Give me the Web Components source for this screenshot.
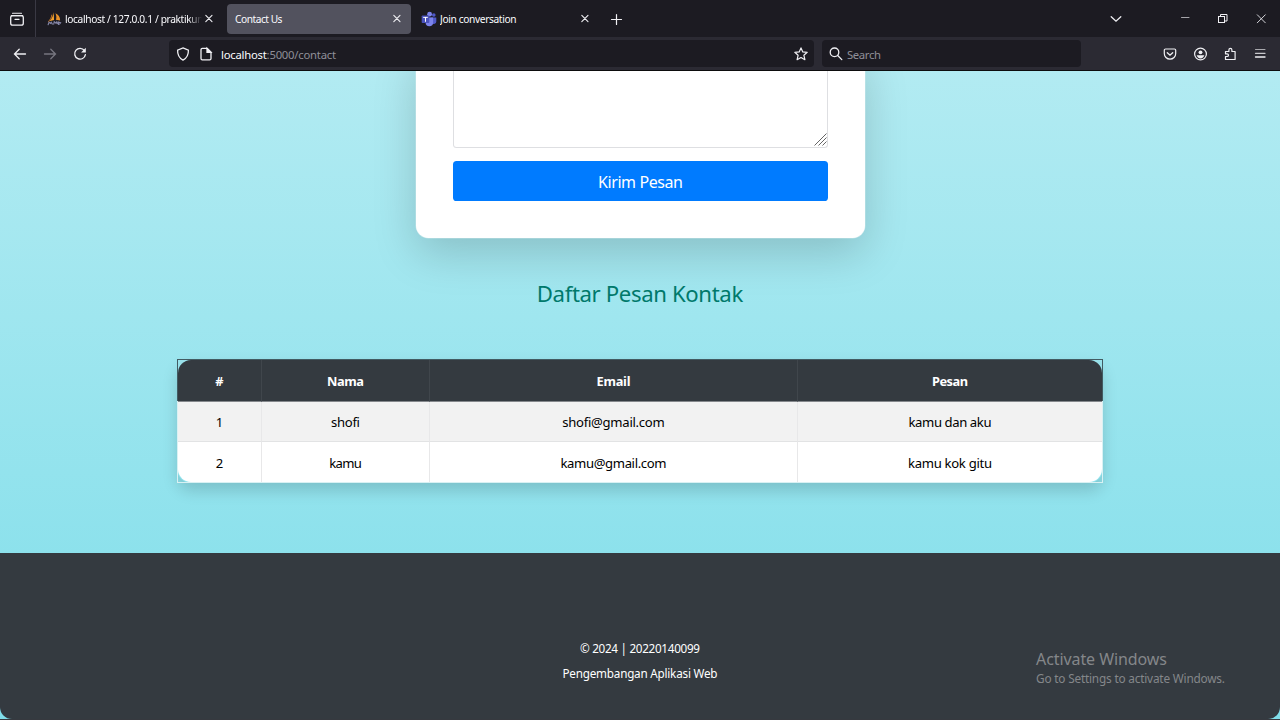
<!DOCTYPE html>
<html lang="id">
<head>
<meta charset="utf-8">
<title>Contact Us</title>
<style>
html,body{margin:0;height:720px;overflow:hidden;background:#36393f}
body{font-family:"Noto Sans","Open Sans",sans-serif}
</style>
</head>
<body>
<desktop-screen></desktop-screen>
<script>
const define = (name, html, setup) => customElements.define(name, class extends HTMLElement {
  connectedCallback() {
    if (this.shadowRoot) return;
    const t = document.createElement('template');
    t.innerHTML = html;
    this.attachShadow({mode: 'open'}).append(t.content.cloneNode(true));
    if (setup) setup(this);
  }
});

/* A single line of text tracked so that it fills the width given in "w". */
define('fit-text', `<style>
:host{display:inline-block;white-space:nowrap;flex:none}
</style><slot></slot>`, el => {
  const w = parseFloat(el.getAttribute('w'));
  const n = el.textContent.length;
  const natural = el.getBoundingClientRect().width;
  el.style.letterSpacing = ((w - natural) / (n - 1)) + 'px';
  el.style.marginRight = (-(w - natural) / (n - 1)) + 'px';
});

const icons = {
  view: '<path d="M3.5 2.2h9M2.3 4.6h11.4" stroke-width="1.1"/><rect x="1.7" y="4.6" width="12.6" height="9.6" rx="2"/><path d="M6 8.3h4"/>',
  close: '<path d="M4.8 4.4l6.2 6.2M11 4.4l-6.2 6.2" stroke-width="1.1"/>',
  plus: '<path d="M7.5 2.5v10M2.500 7.5h10" stroke-width="1.2"/>',
  chevron: '<path d="M3.2 5.7L8 10.2l4.8-4.5" stroke-width="1.3"/>',
  min: '<path d="M4.5 6.5h7.5" stroke="#a5a5aa" stroke-width="1"/>',
  restore: '<rect x="3.5" y="5.5" width="6" height="6" stroke-width="1"/><path d="M5.500 5.500v-2h6.500v6.500h-2.500" stroke-width="1"/>',
  wclose: '<path d="M4.3 3.800l8 8M12.3 3.800l-8 8" stroke-width="1" stroke="#d5d5da"/>',
  back: '<path d="M13.5 8H2.8M7.2 3.3L2.5 8l4.7 4.7"/>',
  fwd: '<path d="M2.5 8h10.7M8.8 3.3L13.5 8l-4.7 4.7"/>',
  reload: '<path d="M12.4 4.5A5.4 5.4 0 1 0 13.4 8.6"/><path d="M13.8 1.8v4.7H9.1z" fill="currentColor" stroke="none"/>',
  shield: '<path d="M8 1.9l5.4 2.2c.2 4.6-1.6 8-5.4 10-3.800-2-5.600-5.400-5.400-10z"/>',
  page: '<path d="M4.300 2.400h4.800l3.900 3.900v6.300a1.300 1.300 0 0 1-1.300 1.300H4.300A1.300 1.300 0 0 1 3 12.600V3.700a1.300 1.300 0 0 1 1.300-1.300z"/><path d="M9 2.400v4h4z" fill="currentColor"/>',
  star: '<path d="M8 1.900l1.800 4 4.400.4-3.300 3 1 4.400L8 11.500l-3.900 2.200 1-4.400-3.300-3 4.400-.4z" stroke-width="1.200" stroke-linejoin="round"/>',
  search: '<circle cx="6.500" cy="6.300" r="4.300"/><path d="M9.700 9.500l4.100 4.100"/>',
  pocket: '<path d="M3.500 3h9A1.200 1.200 0 0 1 13.700 4.200V7.500a5.700 5.700 0 0 1-11.400 0V4.200A1.200 1.200 0 0 1 3.500 3z" stroke-width="1.200"/><path d="M5.300 6.700L8 9.200l2.700-2.500"/>',
  account: '<circle cx="8.500" cy="8" r="5.900" stroke-width="1.200"/><circle cx="8.500" cy="6.300" r="1.900" fill="currentColor" stroke="none"/><path d="M4.700 9.300h7.600c-.5 2-1.900 3.100-3.800 3.100S5.200 11.300 4.700 9.300z" fill="currentColor" stroke="none"/>',
  puzzle: '<path d="M3.500 13.500V10.500h1.600a1.300 1.300 0 0 0 0-2.700H3.500V5.500h3.400V3.900a1.500 1.500 0 0 1 3 0v1.600h3.200v8z" stroke-width="1.200" stroke-linejoin="round"/>',
  menu: '<path d="M3.500 3.500h9.500" stroke="#a9a9ae" stroke-width="1"/><path d="M3.500 7.300h9.500" stroke="#c8c8cc"/><path d="M3.500 11h9.500"/>',
  sails: '<path d="M7.200 1.200L7.500 9.700 2.600 11C4.800 8.300 6.800 5 7.200 1.200z" fill="#f5a12a" stroke="none"/><path d="M9 2.400c3.200 1.300 5 4 5 7.600L9.500 9.400C10.300 7 10.100 4.800 9 2.400z" fill="#e89129" stroke="none"/><path d="M5.200 4.300c-.4 3-1.800 5-3.600 6.900" stroke="#df8529" stroke-width=".9"/><path d="M1.200 14.600l1-2.700 1.500 1.300.8-1.200 1.200 2M7.200 14l.5-2.600 2 1.700.8-1.600 1 2M12.300 14.300v-2.600l2.200.9-1 1.300" stroke="#8687a8" stroke-width="1.200"/>',
  teams: '<circle cx="12.800" cy="4" r="1.800" fill="#5059c9" stroke="none"/><path d="M9.500 6.400h5.800v4a2.700 2.700 0 0 1-4.500 2z" fill="#5059c9" stroke="none"/><circle cx="8.600" cy="3.200" r="2.400" fill="#7b83eb" stroke="none"/><path d="M4.600 6.400h7.500v5a3.750 3.750 0 0 1-7.500 0z" fill="#7b83eb" stroke="none"/><rect x=".7" y="4.400" width="7.600" height="7.600" rx=".8" fill="#4b53bc" stroke="none"/><path d="M2.600 6.400h3.800M4.500 6.400v4" stroke="#fff" stroke-width="1"/>'
};
define('ui-icon', `<style>
:host{display:block;flex:none;width:16px;height:16px;color:#f0f0f4}
svg{display:block;width:100%;height:100%;fill:none;stroke:currentColor;stroke-width:1.300;stroke-linecap:round}
</style><svg viewBox="0 0 16 16"></svg>`, el => {
  el.shadowRoot.querySelector('svg').innerHTML = icons[el.getAttribute('name')];
});

define('browser-tab', `<style>
:host{display:flex;box-sizing:border-box;align-items:center;flex:none;width:184px;height:30px;border-radius:4px;padding:0 6px 0 8px;color:#fbfbfe;font-size:10.200px}
:host([active]){background:#52525e}
.label{flex:1;min-width:0;overflow:hidden;line-height:18px}
:host([long]) .label{-webkit-mask-image:linear-gradient(to left,transparent,#000 14px);mask-image:linear-gradient(to left,transparent,#000 14px);margin-right:-1px}
</style><slot name="icon"></slot><div class="label"><slot></slot></div><ui-icon name="close"></ui-icon>`);

define('tab-strip', `<style>
:host{display:flex;align-items:center;height:37px;background:#1c1b22}
.view{box-sizing:border-box;width:36px;height:37px;border-right:1px solid #3a3944;display:flex;align-items:center;padding:1px 0 0 9px;margin-right:3px}
.tabs{display:flex;gap:4px}
.i{width:15px;height:15px;margin-right:3px}
.plus{margin:2px 0 0 10px}
.space{flex:1}
.win{display:flex;padding-right:11px}
</style>
<div class="view"><ui-icon name="view"></ui-icon></div>
<div class="tabs">
<browser-tab long><ui-icon class="i" slot="icon" name="sails"></ui-icon><fit-text w="138.500">localhost / 127.0.0.1 / praktikun</fit-text></browser-tab>
<browser-tab active><fit-text w="47.500">Contact Us</fit-text></browser-tab>
<browser-tab><ui-icon class="i" style="margin-left:-2px;width:16px;height:16px" slot="icon" name="teams"></ui-icon><fit-text w="76.500">Join conversation</fit-text></browser-tab>
</div>
<ui-icon class="plus" name="plus"></ui-icon>
<div class="space"></div>
<div class="win"><ui-icon name="chevron" style="margin-right:53px"></ui-icon><ui-icon name="min" style="margin-right:22px"></ui-icon><ui-icon name="restore" style="margin-right:22px"></ui-icon><ui-icon name="wclose"></ui-icon></div>`);

define('nav-bar', `<style>
:host{display:flex;box-sizing:border-box;align-items:center;height:34px;background:#2b2a33;border-bottom:1px solid #0c0c0d;padding:0 12px;font-size:11.300px;color:#8f8f98}
.g{display:flex;gap:14px}
.field{box-sizing:border-box;display:flex;align-items:center;height:27px;border-radius:4px;background:#1c1b22}
.url{width:645px;margin-left:81px;padding:0 5px 0 6px;gap:7px}
.url fit-text{margin-top:2px}
b{font-weight:400;color:#fbfbfe}
.search{width:259px;margin-left:8px;padding:0 6px;gap:3px}
.search fit-text{margin-top:2px}
.space{flex:1}
</style>
<div class="g"><ui-icon name="back"></ui-icon><ui-icon name="fwd" style="color:#777680"></ui-icon><ui-icon name="reload"></ui-icon></div>
<div class="field url"><ui-icon name="shield"></ui-icon><ui-icon name="page"></ui-icon><fit-text w="115"><b>localhost</b>:5000/contact</fit-text><div class="space"></div><ui-icon name="star"></ui-icon></div>
<div class="field search"><ui-icon name="search"></ui-icon><fit-text w="34">Search</fit-text></div>
<div class="space"></div>
<div class="g"><ui-icon name="pocket"></ui-icon><ui-icon name="account"></ui-icon><ui-icon name="puzzle"></ui-icon><ui-icon name="menu"></ui-icon></div>`);

define('contact-card', `<style>
:host{display:block;box-sizing:border-box;width:449px;height:187px;margin:-20px 0 0 416px;padding:0 37px;background:#fff;border-radius:12.500px;box-shadow:0 0 0 .500px rgba(235,245,246,.5),0 14.400px 43.200px rgba(0,0,0,.175)}
.area{box-sizing:border-box;height:97px;border:1px solid #dedfe2;border-top:0;border-radius:0 0 3.500px 3.500px;display:flex;align-items:flex-end;justify-content:flex-end}
svg{display:block;width:13px;height:13px;margin:0 0 1px}
.button{display:flex;align-items:center;justify-content:center;height:40px;margin-top:13px;border-radius:3.600px;background:#007bff;color:#fff;font-size:16px}
.button fit-text{margin-top:1px}
</style><div class="area"><svg viewBox="0 0 13 13" fill="none" stroke="#666" stroke-width="1"><path d="M.5 12.500L12.500.5M4.500 12.500l8-8M8.500 12.500l4-4"/></svg></div><div class="button"><fit-text w="85">Kirim Pesan</fit-text></div>`);

define('message-table', `<style>
:host{display:block;position:relative;box-sizing:border-box;width:926px;height:124px;padding:1px;margin:0 auto;border-radius:14px;box-shadow:0 7.200px 14.400px rgba(0,0,0,.15);font-size:13.100px;color:#000}
.body{border-radius:13px;overflow:hidden}
.row{display:grid;grid-template-columns:84px 168px 368px 304px}
.row>div{box-sizing:border-box;display:flex;align-items:center;justify-content:center;height:41px;background:#fff;border-right:1px solid #e8e8e9;padding-top:1px}
.row>div:last-child{border-right:0}
.head>div{height:42px;background:#343a40;border-right-color:#40464c;border-bottom:1px solid #85888c;color:#fff;font-weight:700;font-size:12.800px}
.odd>div{height:40px;background:#f2f2f2;border-bottom:1px solid #e2e3e4;padding-top:0}
.even>div{height:40px;padding-top:2px}
.frame{position:absolute;left:0;right:0;box-sizing:border-box;pointer-events:none}
.top{top:0;height:42px;border:1px solid #425b62;border-bottom:0}
.bottom{top:42px;bottom:0;border:1px solid #d9f1f3;border-top:0}
</style>
<div class="body">
<div class="row head"><div>#</div><div><fit-text w="37">Nama</fit-text></div><div><fit-text w="34">Email</fit-text></div><div><fit-text w="36">Pesan</fit-text></div></div>
<div class="row odd"><div>1</div><div><fit-text w="29">shofi</fit-text></div><div><fit-text w="102.500">shofi@gmail.com</fit-text></div><div><fit-text w="83">kamu dan aku</fit-text></div></div>
<div class="row even"><div>2</div><div><fit-text w="32.500">kamu</fit-text></div><div><fit-text w="106">kamu@gmail.com</fit-text></div><div><fit-text w="84">kamu kok gitu</fit-text></div></div>
</div><div class="frame top"></div><div class="frame bottom"></div>`);

define('page-footer', `<style>
:host{display:flex;box-sizing:border-box;flex-direction:column;align-items:center;height:166px;padding-top:83px;background:#343a40;border-radius:0 0 12px 12px;color:#fff;font-size:11.700px;line-height:25px}
</style><fit-text w="120">© 2024 | 20220140099</fit-text><fit-text w="155">Pengembangan Aplikasi Web</fit-text>`);

define('contact-page', `<style>
:host{display:flex;flex-direction:column;height:648px;overflow:hidden;background:linear-gradient(#b2ebf2,#80deea)}
.title{display:flex;justify-content:center;height:32px;margin:40px 0 49px;color:#00796b;font-size:22.200px;line-height:32px}
page-footer{margin-top:auto}
</style><contact-card></contact-card><div class="title"><fit-text w="206.500">Daftar Pesan Kontak</fit-text></div><message-table></message-table><page-footer></page-footer>`);

define('activation-notice', `<style>
:host{display:flex;flex-direction:column;align-items:flex-start;position:absolute;left:1036px;top:648px;color:#84878a}
.a{font-size:16px;line-height:22px}
.b{font-size:11.800px;line-height:17px}
</style><fit-text class="a" w="131">Activate Windows</fit-text><fit-text class="b" w="189">Go to Settings to activate Windows.</fit-text>`);

define('desktop-screen', `<style>
:host{display:block;position:relative;width:1280px;height:720px;overflow:hidden}
</style><tab-strip></tab-strip><nav-bar></nav-bar><contact-page></contact-page><activation-notice></activation-notice>`);
</script>
</body>
</html>
